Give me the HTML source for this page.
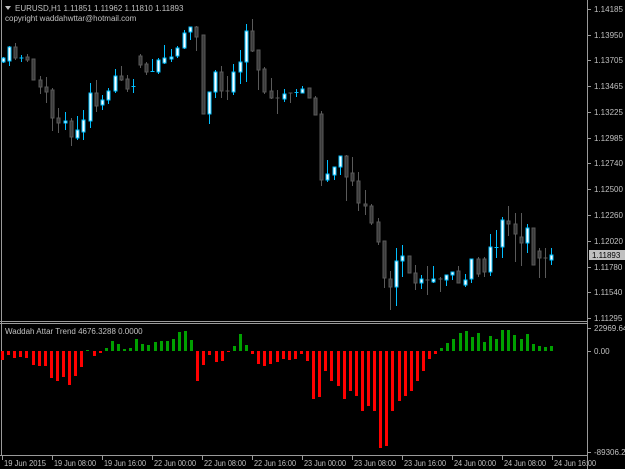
<!DOCTYPE html>
<html><head><meta charset="utf-8"><style>
html,body{margin:0;padding:0;background:#000;width:625px;height:469px;overflow:hidden}
svg{display:block}
text{font-family:"Liberation Sans",sans-serif;font-size:8px;fill:#c0c0c0}
</style></head><body>
<svg id="s" width="625" height="469" xmlns="http://www.w3.org/2000/svg">
<rect width="625" height="469" fill="#000"/>
<g stroke="#9a9a9a" stroke-width="1" fill="none">
<line x1="1.5" y1="0" x2="1.5" y2="455"/>
<line x1="587.5" y1="0" x2="587.5" y2="469"/>
<line x1="0" y1="321.5" x2="587" y2="321.5"/>
<line x1="0" y1="323.5" x2="587" y2="323.5"/>
<line x1="0" y1="455.5" x2="587" y2="455.5"/>
</g>
<polygon points="5,6 11,6 8,10" fill="#c0c0c0"/>
<text x="15" y="11">EURUSD,H1  1.11851 1.11962 1.11810 1.11893</text>
<text x="5" y="21">copyright waddahwttar@hotmail.com</text>
<text x="5" y="334">Waddah Attar Trend 4676.3288 0.0000</text>
<g id="c"></g>
<g id="ax"></g>
<rect x="589" y="250" width="36" height="10" fill="#c0c0c0"/>
<text x="592" y="258" style="fill:#000">1.11893</text>
</svg>
<script>
var ns="http://www.w3.org/2000/svg",g=document.getElementById('c'),ax=document.getElementById('ax');
function el(t,a,p){var e=document.createElementNS(ns,t);for(var k in a)e.setAttribute(k,a[k]);(p||g).appendChild(e);return e;}
var C=[[3,58,62,57,63,1],[9,47,61,46,66,1],[15,47,58,43,60,0],[21,57.5,58.5,55,62,1],[27,57,60,54,62,0],[33,59,80,59,80,0],[40,80,87,76,94,0],[46,87,92,77,103,0],[52,90,118,88,131,0],[58,118,123,108,133,0],[65,121,123,112,130,1],[71,121,137,118,146,0],[77,130,138,116,140,1],[83,120,132,110,140,1],[90,93,121,83,128,1],[96,93,106,80,112,0],[102,100,105,95,110,1],[108,91,100,88,104,1],[115,76,91,69,93,1],[121,76,80,66,81,0],[127,79,89,75,92,0],[133,86,87,79,93,1],[140,56,65,54,68,0],[146,64,72,62,75,0],[152,71,72,59,72,1],[158,60,72,58,74,1],[164,58,63,45,64,1],[171,57,59,49,62,1],[177,48,56,46,58,1],[184,33,48,30,49,1],[190,27,32,27,40,1],[196,27,37,26,51,0],[203,35,114,35,114,0],[209,92,114,92,124,1],[215,72,92,70,98,1],[221,72,91,66,98,0],[227,90.5,91.5,76,100,0],[233,72,92,64,95,1],[240,62,72,50,84,1],[246,31,62,24,82,1],[252,31,51,19,52,0],[258,50,70,50,90,0],[264,69,92,67,94,0],[271,91,98,78,99,0],[277,97.5,98.5,90,114,0],[284,94,99,89,102,1],[290,92.5,93.5,93,103,0],[296,92,93,89,97,1],[302,89,93,86,93,1],[309,88,98,88,98,0],[315,98,115,96,115,0],[321,114,180,111,186,0],[327,174,180,160,182,1],[334,167,175,167,180,1],[340,156,167,156,175,1],[346,156,177,155,201,0],[352,173,181,157,186,0],[358,181,203,172,211,0],[365,204,206,190,215,0],[371,206,223,204,225,0],[378,222,242,218,245,0],[384,241,278,241,288,0],[390,279,287,271,310,0],[396,261,287,248,306,1],[402,256,261,245,277,1],[409,256,273,256,273,0],[415,273,283,265,290,0],[421,279,283,275,289,1],[427,279.5,280.5,266,295,0],[433,279,282,266,283,1],[440,278.5,279.5,277,292,0],[446,275,280,275,286,1],[452,272,275,272,280,1],[458,271,283,266,283,0],[465,280,285,274,287,1],[471,259,279,259,283,1],[478,259,274,257,277,0],[484,259,272,257,277,0],[490,247,272,234,276,1],[496,247,248,230,258,1],[502,220,247,217,258,1],[508,221,224,206,236,0],[515,224,234,213,262,0],[521,237,243,213,266,0],[527,228,243,224,253,1],[533,228,265,228,264,0],[539,251,258,248,278,0],[545,257.5,258.5,248,278,0],[551,255,260,248,265,1]];
C.forEach(function(c){var x=c[0],b=c[5];
el('line',{x1:x+.5,x2:x+.5,y1:c[3],y2:c[4],stroke:b?'#00bfff':'#5a5a5a'});
var h=Math.max(1,c[2]-c[1]);
if(h<=1.5){el('line',{x1:x-1.5,x2:x+2.5,y1:c[1]+.5,y2:c[1]+.5,stroke:b?'#00bfff':'#5a5a5a'});}
else el('rect',{x:x-1,y:c[1],width:3,height:h,fill:b?'#fff':'#3a3a3a',stroke:b?'#00bfff':'#5a5a5a','stroke-width':1});
});
var V=[-9,-4,-7,-6,-7,-14,-15,-15,-27,-30,-26,-34,-25,-16,1,-5,-2,3,10,7,2,3,12,7,6,9,10,10,12,19,20,11,-30,-14,-4,-11,-10,-1,5,17,6,-3,-13,-15,-13,-11,-8,-9,-8,-3,-10,-48,-46,-20,-30,-35,-48,-40,-45,-60,-55,-60,-97,-95,-60,-50,-45,-40,-30,-20,-8,-3,3,8,12,18,20,14,18,9,15,12,21,21,16,12,17,7,5,4,5];
var x0=2,sp=(551-2)/(V.length-1),z=351;
V.forEach(function(v,i){var x=Math.round(x0+i*sp);
if(v>=0)el('rect',{x:x-1,y:z-v,width:3,height:Math.max(1,v),fill:'#00a000'});
else el('rect',{x:x-1,y:z,width:3,height:-v,fill:'#ff0000'});});
var P=[["1.14185",9],["1.13950",35],["1.13705",60],["1.13465",86],["1.13225",112],["1.12985",138],["1.12740",163],["1.12500",189],["1.12260",215],["1.12020",241],["1.11780",267],["1.11540",292],["1.11295",318],["22969.64",328],["0.00",351],["-89306.20",452]];
P.forEach(function(p){el('line',{x1:587,x2:591,y1:p[1]+.5,y2:p[1]+.5,stroke:'#9a9a9a'},ax);var t=el('text',{x:594,y:p[1]+3},ax);t.textContent=p[0];});
var T=["19 Jun 2015","19 Jun 08:00","19 Jun 16:00","22 Jun 00:00","22 Jun 08:00","22 Jun 16:00","23 Jun 00:00","23 Jun 08:00","23 Jun 16:00","24 Jun 00:00","24 Jun 08:00","24 Jun 16:00"];
T.forEach(function(s,i){var x=2+i*50;el('line',{x1:x+.5,x2:x+.5,y1:455,y2:460,stroke:'#9a9a9a'},ax);var t=el('text',{x:x+2,y:466,textLength:42,lengthAdjust:'spacingAndGlyphs'},ax);t.textContent=s;});
</script>
</body></html>
